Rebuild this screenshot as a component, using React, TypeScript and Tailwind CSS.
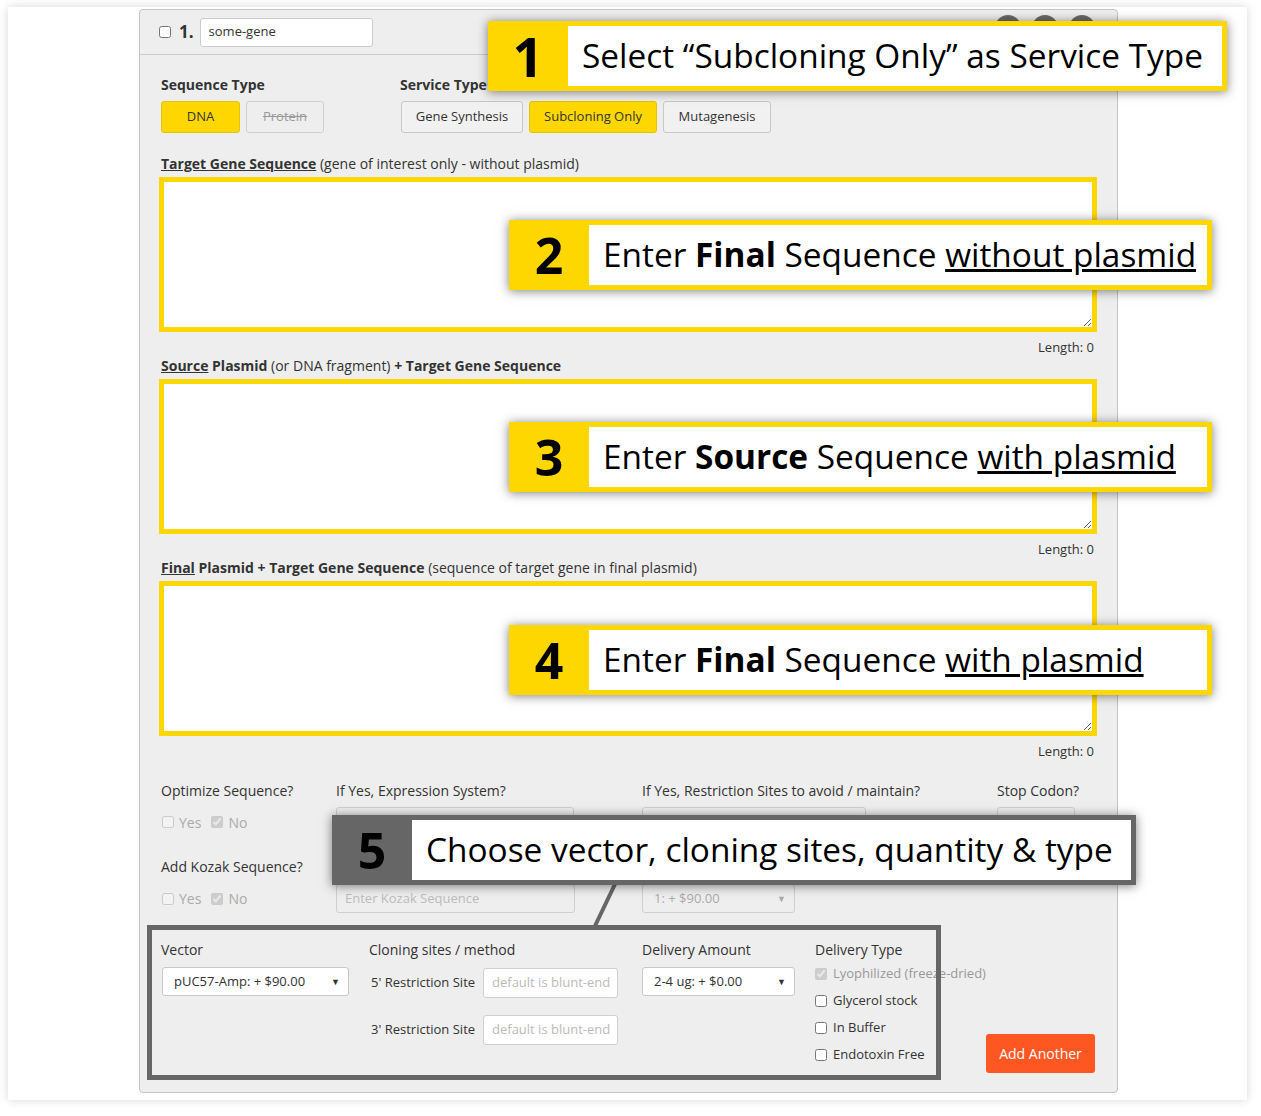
import React from "react";

function Cb({ checked = false, disabled = false }: { checked?: boolean; disabled?: boolean }) {
  return (
    <input
      type="checkbox"
      checked={checked}
      disabled={disabled}
      readOnly
      className="m-0 w-[12px] h-[12px] shrink-0"
    />
  );
}

function Btn({ label, active = false, disabled = false, w }: { label: string; active?: boolean; disabled?: boolean; w: string }) {
  return (
    <div
      className={
        "h-[32px] flex items-center justify-center rounded-[3px] border text-[13px] " +
        w +
        (active
          ? " bg-[#ffd700] border-[#e6c200] text-[#333]"
          : disabled
          ? " bg-[#eeeeee] border-[#d0d0d0] text-[#9a9a9a] line-through"
          : " bg-[#f1f1f1] border-[#c8c8c8] text-[#333]")
      }
    >
      {label}
    </div>
  );
}

function Sel({ text, w, h, disabled = false }: { text: string; w: string; h: string; disabled?: boolean }) {
  return (
    <div
      className={
        "flex items-center justify-between rounded-[3px] border pl-[11px] pr-[8px] text-[13px] " +
        w +
        " " +
        h +
        (disabled ? " bg-[#eeeeee] border-[#cfcfcf] text-[#aaaaaa]" : " bg-white border-[#c8c8c8] text-[#333]")
      }
    >
      <span>{text}</span>
      <span className={"text-[9px] " + (disabled ? "text-[#aaaaaa]" : "text-[#333]")}>▼</span>
    </div>
  );
}

function SeqBlock({ label, top }: { label: React.ReactNode; top: string }) {
  return (
    <>
      <div className={"h-[20px] leading-[20px] text-[14px] pl-px " + top}>{label}</div>
      <textarea
        readOnly
        className="block mt-[3px] -ml-px w-[938px] h-[155px] bg-white border-[5px] border-[#ffd700] outline-none"
      />
      <div className="mt-[6px] h-[18px] leading-[18px] text-[13px] text-right pr-[3px]">Length: 0</div>
    </>
  );
}

function Callout({
  n,
  pos,
  dark = false,
  numSize = "text-[50px]",
  children,
}: {
  n: string;
  pos: string;
  dark?: boolean;
  numSize?: string;
  children: React.ReactNode;
}) {
  return (
    <div
      className={
        "absolute h-[70px] flex shadow-[0_1px_10px_rgba(0,0,0,0.5)] " +
        pos +
        (dark ? " bg-[#666666]" : " bg-[#ffd700]")
      }
    >
      <div className={"w-[80px] flex items-center justify-center font-bold text-black leading-none " + numSize}>{n}</div>
      <div className="flex-1 my-[5px] mr-[5px] bg-white flex items-center pl-[14px] text-[33.4px] text-black leading-none whitespace-nowrap">
        {children}
      </div>
    </div>
  );
}

function YesNo() {
  return (
    <div className="w-[174px] flex items-center text-[14px] text-[#aaaaaa]">
      <Cb disabled />
      <span className="ml-[5px]">Yes</span>
      <span className="ml-[10px] flex items-center">
        <Cb checked disabled />
      </span>
      <span className="ml-[5px]">No</span>
    </div>
  );
}

export default function App() {
  return (
    <div className="relative w-[1261px] h-[1116px] bg-white overflow-hidden font-['Open_Sans','Noto_Sans',sans-serif] text-[#333]">
      <div className="ml-[8px] mt-[7px] w-[1239px] h-[1093px] bg-white shadow-[0_0_9px_rgba(0,0,0,0.16)] pl-[131px] pt-[2px]">
        <div className="w-[979px] h-[1084px] bg-[#eeeeee] border border-[#c4c4c4] rounded-[4px]">
          {/* header */}
          <div className="h-[45px] border-b border-[#cccccc] flex items-center pl-[19px] pr-[22px]">
            <Cb />
            <span className="ml-[8px] font-bold text-[17px] text-[#333]">1.</span>
            <div className="ml-[6px] w-[173px] h-[29px] bg-white border border-[#cccccc] rounded-[3px] px-[8px] flex items-center text-[13px]">
              some-gene
            </div>
            <div className="ml-auto self-start mt-[5px] flex gap-[11px]">
              <div className="w-[26px] h-[26px] rounded-full bg-[#6a6a6a]" />
              <div className="w-[26px] h-[26px] rounded-full bg-[#6a6a6a]" />
              <div className="w-[26px] h-[26px] rounded-full bg-[#6a6a6a]" />
            </div>
          </div>

          {/* body */}
          <div className="pl-[20px] pr-[20px] pt-[20px]">
            <div className="flex">
              <div className="w-[240px] pl-px">
                <div className="h-[20px] leading-[20px] text-[14px] font-bold">Sequence Type</div>
                <div className="mt-[6px] flex gap-[6px]">
                  <Btn label="DNA" active w="w-[79px]" />
                  <Btn label="Protein" disabled w="w-[78px]" />
                </div>
              </div>
              <div>
                <div className="h-[20px] leading-[20px] text-[14px] font-bold">Service Type</div>
                <div className="mt-[6px] flex gap-[6px] pl-px">
                  <Btn label="Gene Synthesis" w="w-[122px]" />
                  <Btn label="Subcloning Only" active w="w-[128px]" />
                  <Btn label="Mutagenesis" w="w-[108px]" />
                </div>
              </div>
            </div>

            <SeqBlock
              top="mt-[21px]"
              label={
                <>
                  <span className="font-bold underline">Target Gene Sequence</span> (gene of interest only - without plasmid)
                </>
              }
            />
            <SeqBlock
              top="mt-0"
              label={
                <>
                  <span className="font-bold underline">Source</span> <span className="font-bold">Plasmid</span> (or DNA
                  fragment) <span className="font-bold">+ Target Gene Sequence</span>
                </>
              }
            />
            <SeqBlock
              top="mt-0"
              label={
                <>
                  <span className="font-bold underline">Final</span>{" "}
                  <span className="font-bold">Plasmid + Target Gene Sequence</span> (sequence of target gene in final
                  plasmid)
                </>
              }
            />

            {/* optimize row */}
            <div className="mt-[21px] flex text-[14px] h-[20px] leading-[20px] pl-px">
              <div className="w-[175px]">Optimize Sequence?</div>
              <div className="w-[306px]">If Yes, Expression System?</div>
              <div className="w-[355px]">If Yes, Restriction Sites to avoid / maintain?</div>
              <div>Stop Codon?</div>
            </div>
            <div className="mt-[6px] flex items-center h-[30px] pl-[2px]">
              <YesNo />
              <div className="w-[306px]">
                <Sel text="" w="w-[238px]" h="h-[30px]" disabled />
              </div>
              <div className="w-[355px]">
                <Sel text="" w="w-[224px]" h="h-[30px]" disabled />
              </div>
              <div>
                <Sel text="" w="w-[78px]" h="h-[30px]" disabled />
              </div>
            </div>

            {/* kozak */}
            <div className="mt-[20px] flex text-[14px] h-[20px] leading-[20px] pl-px">
              <div className="w-[175px]">Add Kozak Sequence?</div>
            </div>
            <div className="mt-[7px] flex items-center h-[29px] pl-[2px]">
              <YesNo />
              <div className="w-[306px]">
                <div className="w-[239px] h-[29px] rounded-[3px] border border-[#cfcfcf] bg-[#eeeeee] flex items-center pl-[8px] text-[13px] text-[#bbbbbb]">
                  Enter Kozak Sequence
                </div>
              </div>
              <div>
                <Sel text="1: + $90.00" w="w-[153px]" h="h-[29px]" disabled />
              </div>
            </div>

            {/* vector row */}
            <div className="mt-[27px] flex items-start pl-px">
              <div className="w-[208px]">
                <div className="h-[20px] leading-[20px] text-[14px]">Vector</div>
                <div className="mt-[7px] pl-px">
                  <Sel text="pUC57-Amp: + $90.00" w="w-[187px]" h="h-[29px]" />
                </div>
              </div>
              <div className="w-[273px]">
                <div className="h-[20px] leading-[20px] text-[14px]">Cloning sites / method</div>
                <div className="mt-[8px] flex items-center pl-[2px]">
                  <div className="w-[112px] text-[13px]">5' Restriction Site</div>
                  <div className="w-[135px] h-[30px] bg-white border border-[#d0d0d0] rounded-[3px] flex items-center pl-[8px] text-[13px] text-[#bbbbbb]">
                    default is blunt-end
                  </div>
                </div>
                <div className="mt-[17px] flex items-center pl-[2px]">
                  <div className="w-[112px] text-[13px]">3' Restriction Site</div>
                  <div className="w-[135px] h-[30px] bg-white border border-[#d0d0d0] rounded-[3px] flex items-center pl-[8px] text-[13px] text-[#bbbbbb]">
                    default is blunt-end
                  </div>
                </div>
              </div>
              <div className="w-[173px]">
                <div className="h-[20px] leading-[20px] text-[14px]">Delivery Amount</div>
                <div className="mt-[7px]">
                  <Sel text="2-4 ug: + $0.00" w="w-[153px]" h="h-[29px]" />
                </div>
              </div>
              <div className="w-[171px] text-[13px]">
                <div className="h-[20px] leading-[20px] text-[14px]">Delivery Type</div>
                <div className="h-[27px] flex items-center text-[#999999] whitespace-nowrap">
                  <Cb checked disabled />
                  <span className="ml-[6px]">Lyophilized (freeze-dried)</span>
                </div>
                <div className="h-[27px] flex items-center">
                  <Cb />
                  <span className="ml-[6px]">Glycerol stock</span>
                </div>
                <div className="h-[27px] flex items-center">
                  <Cb />
                  <span className="ml-[6px]">In Buffer</span>
                </div>
                <div className="h-[27px] flex items-center">
                  <Cb />
                  <span className="ml-[6px]">Endotoxin Free</span>
                </div>
              </div>
              <div className="ml-auto mt-[94px] mr-[2px] w-[109px] h-[39px] rounded-[3px] bg-[#ff5722] text-white text-[14px] flex items-center justify-center">
                Add Another
              </div>
            </div>
          </div>
        </div>
      </div>

      {/* annotation overlays */}
      <div className="absolute left-[147px] top-[925px] w-[794px] h-[155px] border-[5px] border-[#666666]" />
      <svg className="absolute left-[585px] top-[878px]" width="40" height="52" viewBox="0 0 40 52">
        <line x1="32" y1="2" x2="9" y2="50" stroke="#666666" strokeWidth="4" />
      </svg>

      <Callout n="1" pos="left-[488px] top-[21px] w-[739px]" numSize="text-[54px]">
        Select “Subcloning Only” as Service Type
      </Callout>
      <Callout n="2" pos="left-[509px] top-[220px] w-[703px]">
        <span>
          Enter <b>Final</b> Sequence <span className="underline">without plasmid</span>
        </span>
      </Callout>
      <Callout n="3" pos="left-[509px] top-[422px] w-[703px]">
        <span>
          Enter <b>Source</b> Sequence <span className="underline">with plasmid</span>
        </span>
      </Callout>
      <Callout n="4" pos="left-[509px] top-[625px] w-[703px]">
        <span>
          Enter <b>Final</b> Sequence <span className="underline">with plasmid</span>
        </span>
      </Callout>
      <Callout n="5" pos="left-[332px] top-[815px] w-[804px]" dark>
        Choose vector, cloning sites, quantity &amp; type
      </Callout>
    </div>
  );
}
